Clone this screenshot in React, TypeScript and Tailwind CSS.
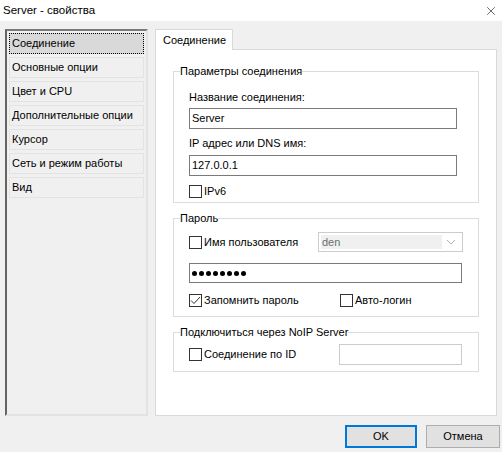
import { X } from 'lucide-react';

const items = [
  'Соединение',
  'Основные опции',
  'Цвет и CPU',
  'Дополнительные опции',
  'Курсор',
  'Сеть и режим работы',
  'Вид',
];

function CheckBox({ checked, label }: { checked?: boolean; label: string }) {
  return (
    <label className="flex items-center gap-[2px] h-[13px]">
      <span className="w-[13px] h-[13px] border border-[#333333] bg-white flex items-center justify-center shrink-0">
        {checked && (
          <svg width="11" height="11" viewBox="0 0 11 11">
            <polyline points="1,5.5 4,8.5 10,2" fill="none" stroke="#333333" strokeWidth="1" />
          </svg>
        )}
      </span>
      <span className="leading-[13px]">{label}</span>
    </label>
  );
}

function Group({ title, className, children }: { title: string; className?: string; children: React.ReactNode }) {
  return (
    <fieldset className={`border border-[#dcdcdc] mx-[17px] p-0 ${className ?? ''}`}>
      <legend className="ml-[6px] p-0 leading-[15px]">{title}</legend>
      <div className="px-[15px]">{children}</div>
    </fieldset>
  );
}

export default function App() {
  return (
    <div className="w-[502px] h-[452px] bg-[#f0f0f0] text-[11px] text-black font-['Liberation_Sans',Arial,sans-serif] overflow-hidden">
      <div className="h-[21px] bg-white flex items-center justify-between pl-[3px] pr-[4px]">
        <span className="text-[11.5px]">Server - свойства</span>
        <X size={14} strokeWidth={1} className="text-black" />
      </div>

      <div className="flex pt-[8px] pl-[5px]">
        <div className="w-[143px] h-[387px] border-2 border-t-[#7a7a7a] border-l-[#646464] border-r-[#e3e3e3] border-b-[#e3e3e3] p-[2px] flex flex-col gap-[3px]">
          {items.map((t, i) => (
            <div
              key={t}
              className={
                i === 0
                  ? 'h-[21px] border border-dotted border-black bg-[#d9d9d9] pl-[2px] flex items-center'
                  : 'h-[21px] border border-[#e3e3e3] pl-[2px] flex items-center'
              }
            >
              {t}
            </div>
          ))}
        </div>

        <div className="ml-[7px] w-[342px] flex flex-col">
          <div className="relative z-10 w-[78px] h-[21px] bg-white border border-b-0 border-[#d9d9d9] pl-[7px] flex items-center">
            Соединение
          </div>
          <div className="-mt-px h-[367px] bg-white border border-[#d9d9d9] pt-[14px]">
            <Group title="Параметры соединения" className="pb-[4px]">
              <div className="mt-[11px] leading-[15px]">Название соединения:</div>
              <div className="mt-[3px] w-[268px] h-[21px] border border-[#7a7a7a] pl-[2px] flex items-center">Server</div>
              <div className="mt-[7px] leading-[15px]">IP адрес или DNS имя:</div>
              <div className="mt-[4px] w-[268px] h-[21px] border border-[#7a7a7a] pl-[2px] flex items-center">127.0.0.1</div>
              <div className="mt-[9px]">
                <CheckBox label="IPv6" />
              </div>
            </Group>

            <Group title="Пароль" className="mt-[8px] pb-[9px]">
              <div className="mt-[6px] flex items-center h-[20px]">
                <div className="w-[129px]">
                  <CheckBox label="Имя пользователя" />
                </div>
                <div className="w-[145px] h-[20px] border border-[#cccccc] bg-white flex items-center p-[2px]">
                  <div className="flex-1 h-full bg-[#f0f0f0] text-[#6d6d6d] pl-px flex items-center">den</div>
                  <svg width="18" height="14" viewBox="0 0 18 14">
                    <polyline points="5,5 9,9 13,5" fill="none" stroke="#b0b0b0" strokeWidth="1" />
                  </svg>
                </div>
              </div>
              <div className="mt-[11px] w-[273px] h-[20px] border border-[#7a7a7a] pl-[2px] flex items-center gap-[2px]">
                {Array.from({ length: 8 }).map((_, i) => (
                  <span key={i} className="w-[5px] h-[5px] rounded-full bg-black" />
                ))}
              </div>
              <div className="mt-[11px] flex items-center h-[13px]">
                <div className="w-[151px]">
                  <CheckBox checked label="Запомнить пароль" />
                </div>
                <CheckBox label="Авто-логин" />
              </div>
            </Group>

            <Group title="Подключиться через NoIP Server" className="mt-[8px] pb-[6px]">
              <div className="mt-[4px] flex items-center h-[21px]">
                <div className="w-[150px]">
                  <CheckBox label="Соединение по ID" />
                </div>
                <div className="w-[123px] h-[21px] border border-[#cccccc] bg-white" />
              </div>
            </Group>
          </div>
        </div>
      </div>

      <div className="mt-[9px] flex justify-end gap-[9px] pr-[2px]">
        <button className="w-[72px] h-[23px] border-2 border-[#0078d7] bg-[#e1e1e1]">OK</button>
        <button className="w-[74px] h-[23px] border border-[#adadad] bg-[#e1e1e1]">Отмена</button>
      </div>
    </div>
  );
}
